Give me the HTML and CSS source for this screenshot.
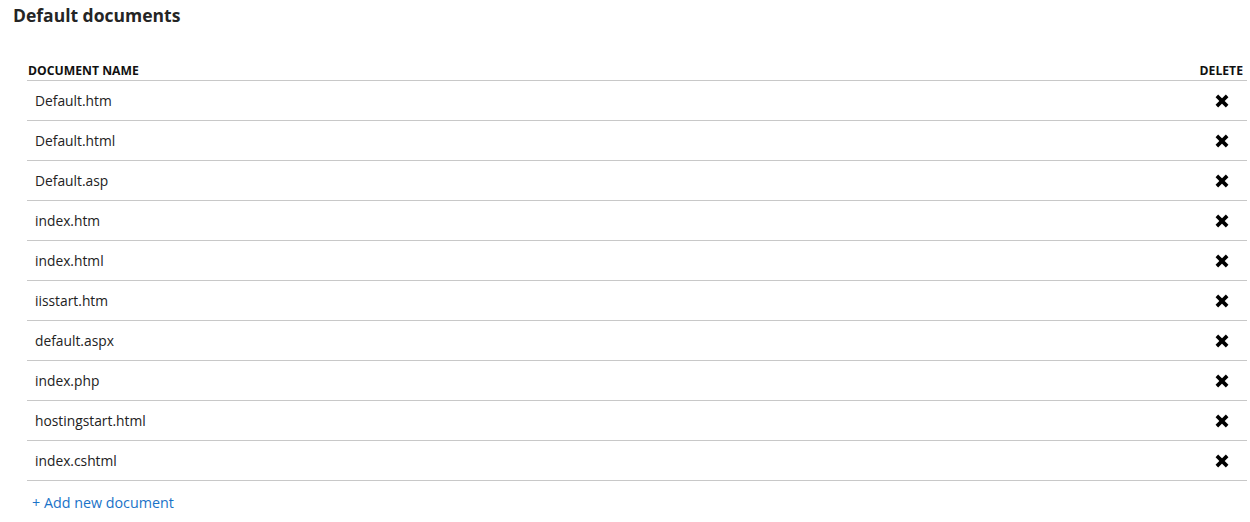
FILE: index.html
```html
<!DOCTYPE html>
<html>
<head>
<meta charset="utf-8">
<link rel="stylesheet" href="styles.css">
</head>
<body>
<div class="page">
  <h2 class="title">Default documents</h2>
  <table class="docs">
    <thead>
      <tr><th class="name">DOCUMENT NAME</th><th class="del">DELETE</th></tr>
    </thead>
    <tbody>
      <tr><td class="name">Default.htm</td><td class="del"><svg class="x" viewBox="0 0 14 14"><path d="M2.5 2.5L11.5 11.5M11.5 2.5L2.5 11.5"/></svg></td></tr>
      <tr><td class="name">Default.html</td><td class="del"><svg class="x" viewBox="0 0 14 14"><path d="M2.5 2.5L11.5 11.5M11.5 2.5L2.5 11.5"/></svg></td></tr>
      <tr><td class="name">Default.asp</td><td class="del"><svg class="x" viewBox="0 0 14 14"><path d="M2.5 2.5L11.5 11.5M11.5 2.5L2.5 11.5"/></svg></td></tr>
      <tr><td class="name">index.htm</td><td class="del"><svg class="x" viewBox="0 0 14 14"><path d="M2.5 2.5L11.5 11.5M11.5 2.5L2.5 11.5"/></svg></td></tr>
      <tr><td class="name">index.html</td><td class="del"><svg class="x" viewBox="0 0 14 14"><path d="M2.5 2.5L11.5 11.5M11.5 2.5L2.5 11.5"/></svg></td></tr>
      <tr><td class="name">iisstart.htm</td><td class="del"><svg class="x" viewBox="0 0 14 14"><path d="M2.5 2.5L11.5 11.5M11.5 2.5L2.5 11.5"/></svg></td></tr>
      <tr><td class="name">default.aspx</td><td class="del"><svg class="x" viewBox="0 0 14 14"><path d="M2.5 2.5L11.5 11.5M11.5 2.5L2.5 11.5"/></svg></td></tr>
      <tr><td class="name">index.php</td><td class="del"><svg class="x" viewBox="0 0 14 14"><path d="M2.5 2.5L11.5 11.5M11.5 2.5L2.5 11.5"/></svg></td></tr>
      <tr><td class="name">hostingstart.html</td><td class="del"><svg class="x" viewBox="0 0 14 14"><path d="M2.5 2.5L11.5 11.5M11.5 2.5L2.5 11.5"/></svg></td></tr>
      <tr><td class="name">index.cshtml</td><td class="del"><svg class="x" viewBox="0 0 14 14"><path d="M2.5 2.5L11.5 11.5M11.5 2.5L2.5 11.5"/></svg></td></tr>
    </tbody>
  </table>
  <a class="add" href="#">+ Add new document</a>
</div>
</body>
</html>
```
FILE: styles.css
```css
html, body {
  margin: 0;
  padding: 0;
  background: #fff;
}
body {
  font-family: "Open Sans", "Noto Sans", "Liberation Sans", sans-serif;
  color: #1e1e1e;
}
.page {
  padding: 3px 3px 0 13px;
}
.title {
  margin: 0;
  font-size: 17.5px;
  font-weight: 700;
  line-height: 24px;
  color: #252525;
}
.docs {
  margin: 36px 0 0 14px;
  width: calc(100% - 14px);
  border-collapse: collapse;
}
.docs th {
  font-size: 12.2px;
  font-weight: 700;
  line-height: 16px;
  padding: 0 0 1px 0;
  border-bottom: 1px solid #c8c8c8;
  color: #111;
}
.docs th.name { text-align: left; padding-left: 1px; }
.docs th.del { text-align: right; padding-right: 4px; }
.docs td {
  height: 39px;
  border-bottom: 1px solid #c8c8c8;
  padding: 0;
  font-size: 13.8px;
  color: #222;
  vertical-align: middle;
}
.docs td.name { padding-left: 8px; }
.docs td.del {
  text-align: right;
  padding-right: 17px;
  width: 60px;
}
.x {
  width: 16px;
  height: 16px;
  display: block;
  margin-left: auto;
}
.x path {
  stroke: #000;
  stroke-width: 3.2;
  fill: none;
}
.add {
  display: inline-block;
  margin: 12px 0 0 19px;
  font-size: 14.3px;
  color: #1a73c8;
  text-decoration: none;
}
```
